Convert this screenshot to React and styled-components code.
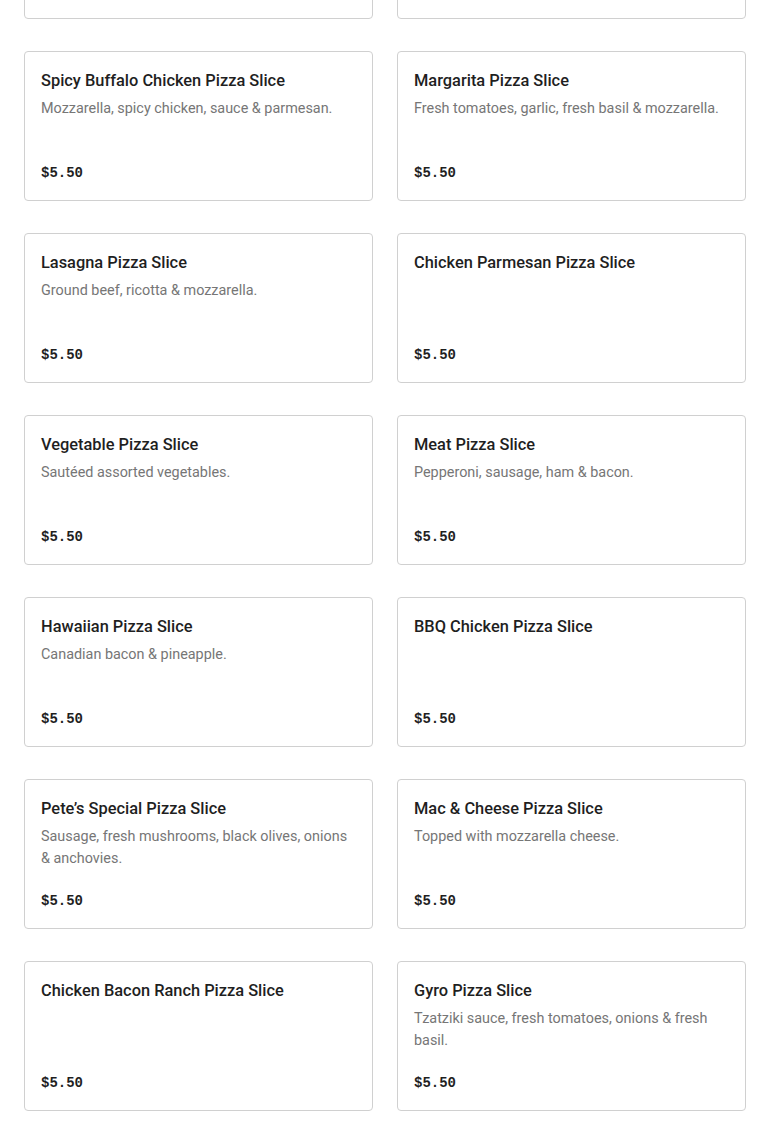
import React from "react";
import styled, { createGlobalStyle } from "styled-components";

const Global = createGlobalStyle`
  html, body { margin: 0; padding: 0; background: #fff; }
  body { font-family: Roboto, "Noto Sans", sans-serif; -webkit-font-smoothing: antialiased; }
`;

const Grid = styled.div`
  display: grid;
  grid-template-columns: 349px 349px;
  column-gap: 24px;
  row-gap: 32px;
  padding: 0 24px 24px;
  margin-top: -131px;
`;

const Card = styled.div`
  box-sizing: border-box;
  height: 150px;
  border: 1px solid #d0d0d0;
  border-radius: 4px;
  padding: 17px 16px 17px;
  display: flex;
  flex-direction: column;
  background: #fff;
`;

const Title = styled.div`
  font-family: Roboto, "Noto Sans", sans-serif;
  font-size: 16.4px;
  font-weight: 500;
  line-height: 24px;
  color: #1f1f1f;
`;

const Desc = styled.div`
  margin-top: 5px;
  font-family: Roboto, "Noto Sans", sans-serif;
  font-size: 14.4px;
  line-height: 22px;
  color: #767676;
`;

const Price = styled.div`
  margin-top: auto;
  font-family: "Liberation Mono", "DejaVu Sans Mono", monospace;
  font-weight: 700;
  font-size: 14px;
  line-height: 20px;
  color: #1f1f1f;
`;

const items = [
  { t: "Cheese Pizza Slice", d: "" },
  { t: "Pepperoni Pizza Slice", d: "" },
  { t: "Spicy Buffalo Chicken Pizza Slice", d: "Mozzarella, spicy chicken, sauce & parmesan." },
  { t: "Margarita Pizza Slice", d: "Fresh tomatoes, garlic, fresh basil & mozzarella." },
  { t: "Lasagna Pizza Slice", d: "Ground beef, ricotta & mozzarella." },
  { t: "Chicken Parmesan Pizza Slice", d: "" },
  { t: "Vegetable Pizza Slice", d: "Sautéed assorted vegetables." },
  { t: "Meat Pizza Slice", d: "Pepperoni, sausage, ham & bacon." },
  { t: "Hawaiian Pizza Slice", d: "Canadian bacon & pineapple." },
  { t: "BBQ Chicken Pizza Slice", d: "" },
  { t: "Pete’s Special Pizza Slice", d: "Sausage, fresh mushrooms, black olives, onions & anchovies." },
  { t: "Mac & Cheese Pizza Slice", d: "Topped with mozzarella cheese." },
  { t: "Chicken Bacon Ranch Pizza Slice", d: "" },
  { t: "Gyro Pizza Slice", d: "Tzatziki sauce, fresh tomatoes, onions & fresh basil." },
];

export default function App() {
  return (
    <>
      <Global />
      <Grid>
        {items.map((it, i) => (
          <Card key={i}>
            <Title>{it.t}</Title>
            {it.d && <Desc>{it.d}</Desc>}
            <Price>$5.50</Price>
          </Card>
        ))}
      </Grid>
    </>
  );
}
